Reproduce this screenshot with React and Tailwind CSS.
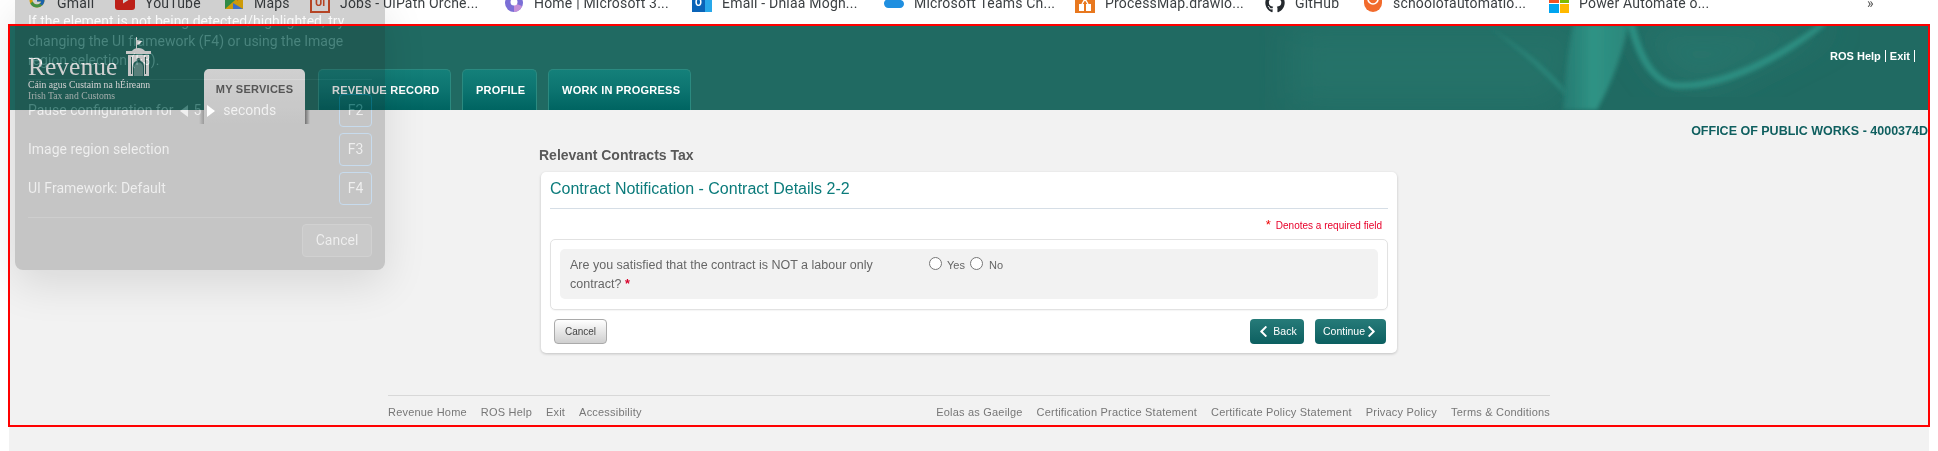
import { FcGoogle } from 'react-icons/fc';
import { FaGithub, FaCloud, FaChevronLeft, FaChevronRight } from 'react-icons/fa';

const sans = 'font-["Liberation_Sans",Arial,sans-serif]';

function YoutubeIcon() {
  return (
    <svg viewBox="0 0 20 20" className="w-5 h-5">
      <rect width="20" height="20" rx="3" fill="#e62117" />
      <path d="M8 6.5l5.5 3.5L8 13.500z" fill="#fff" />
    </svg>
  );
}

function MapsIcon() {
  return (
    <svg viewBox="0 0 20 20" className="w-5 h-5">
      <path d="M1 2h18v16H1z" fill="#34a853" />
      <path d="M1 18L19 2v16z" fill="#fbbc04" />
      <path d="M9 12l10 6H9z" fill="#4285f4" />
      <path d="M14 0l5 4-6 6z" fill="#ea4335" />
    </svg>
  );
}

function UiIcon() {
  return (
    <div className="w-5 h-5 border-2 border-[#dd4f26] flex items-center justify-center text-[11px] font-bold text-[#dd4f26] font-['Roboto',sans-serif]">
      Ui
    </div>
  );
}

function CopilotIcon() {
  return (
    <svg viewBox="0 0 20 20" className="w-5 h-5">
      <circle cx="10" cy="10" r="9" fill="#7b6fd6" />
      <path d="M10 19a9 9 0 008-6l-8-3z" fill="#c58fd8" />
      <circle cx="10" cy="9" r="3.5" fill="#fff" />
    </svg>
  );
}

function OutlookIcon() {
  return (
    <div className="w-5 h-5 flex">
      <div className="w-[13px] h-[16px] mt-1 bg-[#0a64b8] text-white text-[10px] font-bold text-center font-['Roboto',sans-serif]">O</div>
      <div className="w-[7px] h-5 bg-[#28a8ea]" />
    </div>
  );
}

function ProcessMapIcon() {
  return (
    <svg viewBox="0 0 20 20" className="w-5 h-5">
      <rect width="20" height="20" fill="#e8781f" />
      <path d="M4 11h5v7H4zM11 11h5v7h-5z" fill="#fff" />
      <path d="M7 11l3-5 3 5" stroke="#fff" strokeWidth="1.4" fill="none" />
    </svg>
  );
}

function SchoolIcon() {
  return (
    <svg viewBox="0 0 20 20" className="w-5 h-5">
      <path d="M1 0h18v10a9 9 0 01-18 0z" fill="#f26b2d" />
      <path d="M5 6a5 5 0 0010 0" stroke="#fff" strokeWidth="1.6" fill="none" />
    </svg>
  );
}

function MsIcon() {
  return (
    <div className="w-5 h-5 grid grid-cols-2 gap-[1px]">
      <div className="bg-[#f25022]" />
      <div className="bg-[#7fba00]" />
      <div className="bg-[#00a4ef]" />
      <div className="bg-[#ffb900]" />
    </div>
  );
}

const bookmarks = [
  { w: 'w-[88px]', drop: 'mt-0', icon: <FcGoogle size={18} className="ml-[1px]" />, label: 'Gmail' },
  { w: 'w-[109px]', drop: 'mt-0', icon: <YoutubeIcon />, label: 'YouTube' },
  { w: 'w-[86px]', drop: 'mt-[2px]', icon: <MapsIcon />, label: 'Maps' },
  { w: 'w-[194px]', drop: 'mt-1.5', icon: <UiIcon />, label: 'Jobs - UiPath Orche...' },
  { w: 'w-[188px]', drop: 'mt-1.5', icon: <CopilotIcon />, label: 'Home | Microsoft 3...' },
  { w: 'w-[192px]', drop: 'mt-1', icon: <OutlookIcon />, label: 'Email - Dhiaa Mogh...' },
  { w: 'w-[191px]', drop: 'mt-[2px]', icon: <FaCloud size={20} className="text-[#1f8fe0]" />, label: 'Microsoft Teams Ch...' },
  { w: 'w-[190px]', drop: 'mt-1.5', icon: <ProcessMapIcon />, label: 'ProcessMap.drawio...' },
  { w: 'w-[98px]', drop: 'mt-1.5', icon: <FaGithub size={20} className="text-[#24292e]" />, label: 'GitHub' },
  { w: 'w-[186px]', drop: 'mt-1.5', icon: <SchoolIcon />, label: 'schoolofautomatio...' },
  { w: 'w-[318px]', drop: 'mt-1.5', icon: <MsIcon />, label: 'Power Automate o...' },
];

function BookmarkBar() {
  return (
    <div className="h-6 bg-white overflow-hidden font-['Roboto',sans-serif] text-sm text-[#3c4043]">
      <div className="flex h-0 items-center pl-[27px]">
        {bookmarks.map((b) => (
          <div key={b.label} className={`${b.w} flex-none flex items-center gap-2.5`}>
            <div className={`${b.drop} w-5 flex-none`}>{b.icon}</div>
            <span className="mt-1.5 whitespace-nowrap tracking-[0.2px]">{b.label}</span>
          </div>
        ))}
        <span className="mt-1.5 text-[#555]">»</span>
      </div>
    </div>
  );
}

function Swoosh() {
  return (
    <svg viewBox="0 0 1920 86" className="absolute inset-0 w-full h-full" preserveAspectRatio="none">
      <defs>
        <filter id="soft"><feGaussianBlur stdDeviation="2" /></filter>
        <filter id="glow"><feGaussianBlur stdDeviation="18" /></filter>
        <linearGradient id="band" x1="0" x2="1" y1="0" y2="0">
          <stop offset="0" stopColor="#2a8a7f" stopOpacity="0.5" />
          <stop offset="0.45" stopColor="#2f9385" />
          <stop offset="1" stopColor="#2f9385" stopOpacity="0.7" />
        </linearGradient>
      </defs>
      <path d="M1280 0h300l-30 86h-270z" fill="#2a7a70" opacity="0.5" filter="url(#glow)" />
      <path d="M1620 0h210l-130 66-40-10z" fill="#29796f" opacity="0.7" filter="url(#glow)" />
      <path d="M1564 0h56c-6 24-12 50-32 86h-34c2-30 4-56 10-86z" fill="url(#band)" filter="url(#soft)" />
      <path d="M1478 2c30 18 62 44 76 62l3 8c-22-24-50-50-79-70z" fill="#2f9385" opacity="0.7" filter="url(#soft)" />
      <path d="M1618 0c10 36 22 56 44 64 40 6 104-20 156-64h-8c-52 38-108 62-146 58-18-6-30-26-38-58z" fill="#2f9385" opacity="0.9" filter="url(#soft)" />
    </svg>
  );
}

function Logo() {
  return (
    <div className="w-[176px] flex-none pt-[13px] text-white font-['Liberation_Serif',serif]">
      <div className="flex items-end h-[39px]">
        <span className="text-[25.5px] leading-[24px] w-[98px] -mb-[3px]">Revenue</span>
        <svg viewBox="0 0 25 39" className="w-[25px] h-[39px]" fill="#f2f2f2">
          <path d="M10 0h1v3l5 1-2 3-3 1v4h-1z" />
          <path d="M6 14c1-2 4-3 6.500-3s5 1 6.500 3z" />
          <path d="M0 14h25v3H0z" />
          <path d="M2 18h21v21h-5V29a5.500 5.500 0 00-11 0v10H2z" />
          <path d="M5 20h1v17H5zM19 20h1v17h-1z" fill="#1f5a54" />
          <circle cx="12.500" cy="23" r="2" fill="#1f5a54" />
          <path d="M8 30a4.500 4.500 0 019 0v9H8z" opacity="0.35" />
        </svg>
      </div>
      <div className="text-[9.7px] leading-[11px] mt-[3px] whitespace-nowrap">Cáin agus Custaim na hÉireann</div>
      <div className="text-[9.7px] leading-[11px] text-[#c4d2cf] whitespace-nowrap">Irish Tax and Customs</div>
    </div>
  );
}

function Tabs() {
  const tab = 'h-[41px] px-[13px] pt-[13px] rounded-t-[5px] border border-b-0 border-[#2b8a80] bg-gradient-to-b from-[#14807a] via-[#0c7470] to-[#006461] text-white';
  return (
    <div className={`flex gap-[11px] mt-[45px] text-[11px] leading-[14px] font-bold tracking-[0.25px] whitespace-nowrap ${sans}`}>
      <div className="relative h-[55px] w-[101px] mr-[2px] text-center pt-[13px] rounded-t-[5px] bg-gradient-to-b from-white to-[#f2f2f2] text-[#666]">
        MY SERVICES
        <span className="absolute left-[-5px] top-[41px] w-[5px] h-[14px] bg-gradient-to-r from-transparent to-[#bbb]" />
        <span className="absolute right-[-5px] top-[41px] w-[5px] h-[14px] bg-gradient-to-l from-transparent to-[#888]" />
      </div>
      <div className={`${tab} w-[133px] text-center`}>REVENUE RECORD</div>
      <div className={`${tab} w-[75px] text-center`}>PROFILE</div>
      <div className={`${tab} w-[143px] text-center`}>WORK IN PROGRESS</div>
    </div>
  );
}

function Header() {
  return (
    <header className="relative h-[86px] bg-[#206a62] flex justify-between pl-[19px]">
      <Swoosh />
      <div className="relative flex items-start">
        <Logo />
        <Tabs />
      </div>
      <div className={`relative self-start flex mt-[26px] mr-[14px] text-[11px] leading-[12px] font-bold text-white ${sans}`}>
        <span className="pr-1 border-r border-white">ROS Help</span>
        <span className="px-1 border-r border-white">Exit</span>
      </div>
    </header>
  );
}

function Card() {
  return (
    <div className="w-[856px] h-[181px] bg-white rounded-[5px] shadow-[0_1px_3px_rgba(0,0,0,0.2)] px-[9px]">
      <h2 className="h-[37px] pt-[8px] text-base leading-[18px] text-[#0b7b7b] border-b border-[#d6dee6]">
        Contract Notification - Contract Details 2-2
      </h2>
      <div className="h-[30px] pt-[9px] pr-[6px] text-right text-[10px] leading-[14px] text-[#e8002a]">
        <span className="text-[13px] text-[#e00] mr-[5px]">*</span>Denotes a required field
      </div>
      <div className="h-[71px] p-[9px] border border-[#e2e2e2] rounded-[5px] shadow-[0_1px_1px_rgba(0,0,0,0.04)]">
        <div className="h-[50px] flex bg-[#f2f2f2] rounded-[5px] pl-[10px] pt-[7px]">
          <label className="w-[359px] text-[12.5px] leading-[19px] text-[#666]">
            Are you satisfied that the contract is NOT a labour only<br />
            contract? <span className="text-[#d8002a] font-bold">*</span>
          </label>
          <div className="flex items-start pt-[1px] text-[11px] leading-[14px] text-[#666]">
            <input type="radio" name="labour" className="m-0 w-[13px] h-[13px]" />
            <span className="ml-[5px] mr-[5px] mt-[1px]">Yes</span>
            <input type="radio" name="labour" className="m-0 w-[13px] h-[13px]" />
            <span className="ml-[6px] mt-[1px]">No</span>
          </div>
        </div>
      </div>
      <div className="flex items-center justify-between mt-[9px] pl-[4px] pr-[2px] text-[10px]">
        <button className="w-[53px] h-[25px] rounded-[4px] border border-[#aaa] bg-gradient-to-b from-white to-[#cfcfcf] text-[#444]">
          Cancel
        </button>
        <div className="flex gap-[11px]">
          <button className="w-[54px] h-[25px] rounded-[4px] flex items-center justify-center gap-[3px] bg-gradient-to-b from-[#267b79] to-[#0b5f60] text-white text-[10.5px]">
            <FaChevronLeft size={13} />Back
          </button>
          <button className="w-[71px] h-[25px] rounded-[4px] flex items-center justify-center bg-gradient-to-b from-[#267b79] to-[#0b5f60] text-white text-[10.5px]">
            Continue<FaChevronRight size={13} />
          </button>
        </div>
      </div>
    </div>
  );
}

function Footer() {
  const left = ['Revenue Home', 'ROS Help', 'Exit', 'Accessibility'];
  const right = ['Eolas as Gaeilge', 'Certification Practice Statement', 'Certificate Policy Statement', 'Privacy Policy', 'Terms & Conditions'];
  return (
    <footer className="w-[1162px] mt-[42px] pt-[9px] border-t border-[#d8d8d8] flex justify-between text-[11px] leading-[14px] tracking-[0.2px] text-[#777]">
      <div className="flex gap-[14px]">
        {left.map((t) => <span key={t}>{t}</span>)}
      </div>
      <div className="flex gap-[14px]">
        {right.map((t) => <span key={t}>{t}</span>)}
      </div>
    </footer>
  );
}

function ConfigRow({ children, fkey }) {
  return (
    <div className="h-[33px] flex items-center justify-between">
      <div className="flex items-center pt-[1px]">{children}</div>
      <div className="w-[33px] h-[33px] rounded-[4px] border border-[#021628] flex items-center justify-center">{fkey}</div>
    </div>
  );
}

// selector dialog sitting over the page; translucent, text adds light to what is under it
function SelectorDialog() {
  return (
    <div className="absolute left-[15px] top-0 w-[370px] h-[270px] rounded-b-[8px] bg-[rgba(30,30,30,0.206)] shadow-[0_14px_44px_rgba(0,0,0,0.11)]">
      <div className="mix-blend-plus-lighter h-full pl-[13px] pr-[13px] pt-[12px] text-sm leading-[19.5px] text-[#2a2a2a] font-['Roboto',sans-serif]">
        <p className="h-[68px] border-b border-[#090909]">
          If the element is not being detected/highlighted, try changing the UI framework (F4) or using the Image region selection (F3).
        </p>
        <div className="flex flex-col gap-[6px] mt-[14px]">
          <ConfigRow fkey="F2">
            <span>Pause configuration for</span>
            <svg viewBox="0 0 8 12" className="w-2 h-3 ml-[7px]" fill="#2a2a2a"><path d="M8 0v12L0 6z" /></svg>
            <span className="ml-[5px]">5</span>
            <svg viewBox="0 0 8 12" className="w-2 h-3 ml-[6px]" fill="#3a3a3a"><path d="M0 0v12l8-6z" /></svg>
            <span className="ml-2">seconds</span>
          </ConfigRow>
          <ConfigRow fkey="F3">Image region selection</ConfigRow>
          <ConfigRow fkey="F4">UI Framework: Default</ConfigRow>
        </div>
        <div className="border-t border-[#090909] mt-[12px] pt-[6px] flex justify-end">
          <div className="w-[70px] h-[33px] rounded-[4px] border border-[#0c0c0c] bg-[#050505] flex items-center justify-center">Cancel</div>
        </div>
      </div>
    </div>
  );
}

export default function App() {
  return (
    <div className="relative w-[1938px] h-[451px] overflow-hidden bg-white">
      <BookmarkBar />
      <main className={`ml-[9px] w-[1920px] ${sans}`}>
        <Header />
        <div className="h-[341px] bg-[#f2f2f2] flex flex-col items-center">
          <div className="w-full text-right pr-[1px] mt-[14px] text-[12.5px] leading-[14px] font-bold text-[#0f5f5f]">
            OFFICE OF PUBLIC WORKS - 4000374D
          </div>
          <div className="w-[860px] mt-[9px] mb-[9px] text-sm leading-4 font-bold text-[#595959]">Relevant Contracts Tax</div>
          <Card />
          <Footer />
        </div>
      </main>
      <SelectorDialog />
      <div className="absolute left-[8px] top-[24px] w-[1922px] h-[403px] border-2 border-[#ff0000] pointer-events-none" />
    </div>
  );
}
